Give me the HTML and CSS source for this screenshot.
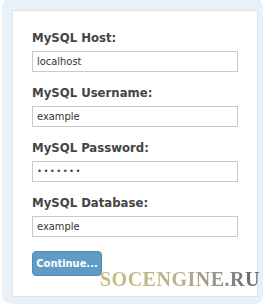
FILE: index.html
```html
<!DOCTYPE html>
<html>
<head>
<meta charset="utf-8">
<link rel="stylesheet" href="styles.css">
</head>
<body>
<div class="frame">
  <form class="panel">
    <div class="field">
      <label class="label">MySQL Host:</label>
      <div class="input">localhost</div>
    </div>
    <div class="field">
      <label class="label">MySQL Username:</label>
      <div class="input">example</div>
    </div>
    <div class="field">
      <label class="label">MySQL Password:</label>
      <div class="input dots">&bull;&bull;&bull;&bull;&bull;&bull;&bull;</div>
    </div>
    <div class="field">
      <label class="label">MySQL Database:</label>
      <div class="input">example</div>
    </div>
    <div class="actions">
      <span class="button">Continue...</span>
    </div>
  </form>
</div>
<div class="watermark">SOCENGINE.RU</div>
</body>
</html>
```
FILE: styles.css
```css
html, body {
  margin: 0;
  padding: 0;
  background: #ffffff;
}
body {
  position: relative;
  width: 270px;
  height: 307px;
  overflow: hidden;
  font-family: "DejaVu Sans Condensed", "Noto Sans", sans-serif;
}
.frame {
  margin: -2px 0 0 2px;
  width: 261px;
  box-sizing: border-box;
  padding: 12px 5px 7px 10px;
  background: #e9f1f8;
  border-radius: 9px;
}
.panel {
  margin: 0;
  background: #ffffff;
  border: 1px solid #d9e3ec;
  padding: 18px 19px 20px 19px;
}
.field {
  display: flex;
  flex-direction: column;
  gap: 5px;
  margin-bottom: 12px;
}
.label {
  font-weight: bold;
  font-size: 13px;
  line-height: 17px;
  color: #444444;
  height: 17px;
}
.input {
  width: 206px;
  height: 21px;
  box-sizing: border-box;
  border: 1px solid #c9c9c9;
  padding: 0 4px;
  font-size: 11px;
  line-height: 19px;
  color: #333333;
  background: #fff;
}
.dots {
  font-family: "DejaVu Sans", sans-serif;
  font-size: 8.5px;
  letter-spacing: 1.4px;
  color: #444;
}
.actions {
  display: flex;
  padding-top: 2px;
}
.button {
  display: flex;
  align-items: center;
  justify-content: center;
  width: 70px;
  height: 25px;
  box-sizing: border-box;
  border-radius: 4px;
  background: #5f9bc5;
  border: 1px solid #5489b2;
  color: #ffffff;
  font-weight: bold;
  font-size: 11px;
}
.watermark {
  position: absolute;
  left: 100px;
  top: 268px;
  font-family: "Liberation Serif", serif;
  font-weight: bold;
  font-size: 20px;
  line-height: 22px;
  letter-spacing: 0.5px;
  background: linear-gradient(90deg, #c9bc7c 0%, #b9b190 50%, #8d8d86 78%, #5f6366 100%);
  -webkit-background-clip: text;
  background-clip: text;
  color: transparent;
}
```
